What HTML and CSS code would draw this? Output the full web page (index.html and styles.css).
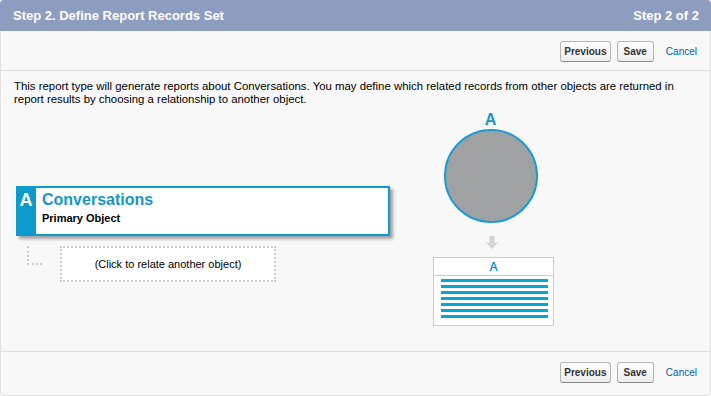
FILE: index.html
```html
<!DOCTYPE html>
<html lang="en">
  <head>
    <meta charset="UTF-8" />
    <title>Define Report Records Set</title>
    <link rel="stylesheet" href="styles.css">
  </head>
  <body>
    <div class="panel">
      <div class="panel-header">
        <h2>Step 2. Define Report Records Set</h2>
        <span class="step">Step 2 of 2</span>
      </div>
      <div class="button-bar top">
        <button class="btn">Previous</button>
        <button class="btn btn-save">Save</button>
        <a href="#" class="cancel">Cancel</a>
      </div>
      <div class="content">
        <p class="intro">
          This report type will generate reports about Conversations. You may define which related records from other objects are returned in
          report results by choosing a relationship to another object.
        </p>
        <div class="content-row">
          <div class="tree">
            <div class="object-card">
              <div class="letter">A</div>
              <div class="object-info">
                <div class="object-name">Conversations</div>
                <div class="object-type">Primary Object</div>
              </div>
            </div>
            <div class="relate-row">
              <div class="connector"></div>
              <div class="relate-box">(Click to relate another object)</div>
            </div>
          </div>
          <div class="diagram">
            <div class="diagram-letter">A</div>
            <div class="circle"></div>
            <svg class="arrow" width="12" height="13" viewBox="0 0 12 13">
              <path d="M3.5 0h5v6.5h3.5l-6 6.5l-6-6.5h3.5z" fill="#d3d3d3" />
            </svg>
            <div class="report-table">
              <div class="report-head">A</div>
              <div class="report-rows">
                <span></span><span></span><span></span><span></span><span></span><span></span><span></span>
              </div>
            </div>
          </div>
        </div>
      </div>
      <div class="button-bar bottom">
        <button class="btn">Previous</button>
        <button class="btn btn-save">Save</button>
        <a href="#" class="cancel">Cancel</a>
      </div>
    </div>
  </body>
</html>
```

FILE: styles.css
```css
* {
  box-sizing: border-box;
  margin: 0;
}
body {
  width: 711px;
  height: 396px;
  font-family: Arial, "Liberation Sans", sans-serif;
  color: #000;
  background: #fff;
}
.panel {
  width: 711px;
  height: 396px;
  display: flex;
  flex-direction: column;
  background: #f8f8f8;
  border: 1px solid #e0e0e0;
  border-top: none;
  border-radius: 4px;
}
.panel-header {
  height: 31px;
  display: flex;
  align-items: center;
  justify-content: space-between;
  padding: 0 12px 1px 13px;
  background: #8e9dbf;
  border-radius: 4px 4px 0 0;
  color: #fff;
  font-size: 13px;
  font-weight: bold;
  margin: 0 -1px;
}
.panel-header h2 {
  font-size: 13px;
}
.button-bar {
  display: flex;
  align-items: center;
  justify-content: flex-end;
  gap: 6px;
  padding-right: 13px;
}
.button-bar.top {
  height: 40px;
  border-bottom: 1px solid #dddddd;
  padding-top: 1px;
}
.button-bar.bottom {
  height: 44px;
  border-top: 1px solid #dddddd;
  padding-bottom: 2px;
}
.btn {
  height: 21px;
  padding: 0 3px;
  font-family: Arial, "Liberation Sans", sans-serif;
  font-size: 10px;
  font-weight: bold;
  color: #333;
  background: linear-gradient(#ffffff, #ededed);
  border: 1px solid #b5b5b5;
  border-bottom-color: #8a8a8a;
  border-radius: 3px;
}
.btn-save {
  padding: 0 6px;
}
.cancel {
  margin-left: 6px;
  font-size: 10px;
  color: #015ba7;
  text-decoration: none;
}
.content {
  flex: 1;
  padding: 9px 13px 0;
}
.intro {
  font-size: 11.4px;
  line-height: 13px;
}
.content-row {
  display: flex;
}
.tree {
  width: 374px;
  margin-left: 2px;
  padding-top: 80px;
}
.object-card {
  height: 50px;
  display: flex;
  background: #fff;
  border: 2px solid #0e9acb;
  box-shadow: 3px 3px 3px rgba(0, 0, 0, 0.35);
}
.letter {
  width: 20px;
  margin: -2px 0 -2px -2px;
  background: #0e9acb;
  color: #fff;
  font-size: 18px;
  font-weight: bold;
  text-align: center;
  padding-top: 4px;
}
.object-info {
  padding: 2px 0 0 6px;
}
.object-name {
  color: #1797c0;
  font-size: 16px;
  font-weight: bold;
  line-height: 20px;
}
.object-type {
  margin-top: 2px;
  font-size: 11px;
  font-weight: bold;
}
.relate-row {
  display: flex;
  margin-top: 10px;
}
.connector {
  width: 15px;
  height: 19px;
  margin-left: 11px;
  border-left: 2px dotted #cccccc;
  border-bottom: 2px dotted #cccccc;
}
.relate-box {
  width: 216px;
  height: 36px;
  margin-left: 18px;
  display: flex;
  align-items: center;
  justify-content: center;
  background: #fff;
  border: 2px dotted #cccccc;
  font-size: 11px;
}
.diagram {
  width: 121px;
  margin-left: 43px;
  padding-top: 6px;
  display: flex;
  flex-direction: column;
  align-items: center;
}
.diagram-letter {
  margin-right: 6px;
  color: #1797c0;
  font-size: 16px;
  font-weight: bold;
  line-height: 16px;
}
.circle {
  width: 94px;
  height: 94px;
  margin: 1px 6px 0 0;
  border-radius: 50%;
  background: #a0a1a3;
  border: 2px solid #1a9bd2;
}
.arrow {
  margin: 13px 4px 0 0;
}
.report-table {
  width: 121px;
  height: 69px;
  margin-top: 8px;
  background: #fff;
  border: 1px solid #cccccc;
}
.report-head {
  height: 18px;
  border-bottom: 1px solid #cccccc;
  color: #1797c0;
  font-size: 12px;
  font-weight: bold;
  text-align: center;
  line-height: 19px;
}
.report-rows {
  display: flex;
  flex-direction: column;
  gap: 3px;
  padding: 3px 5px 0 7px;
}
.report-rows span {
  height: 3px;
  background: #0aa6d3;
}
```
